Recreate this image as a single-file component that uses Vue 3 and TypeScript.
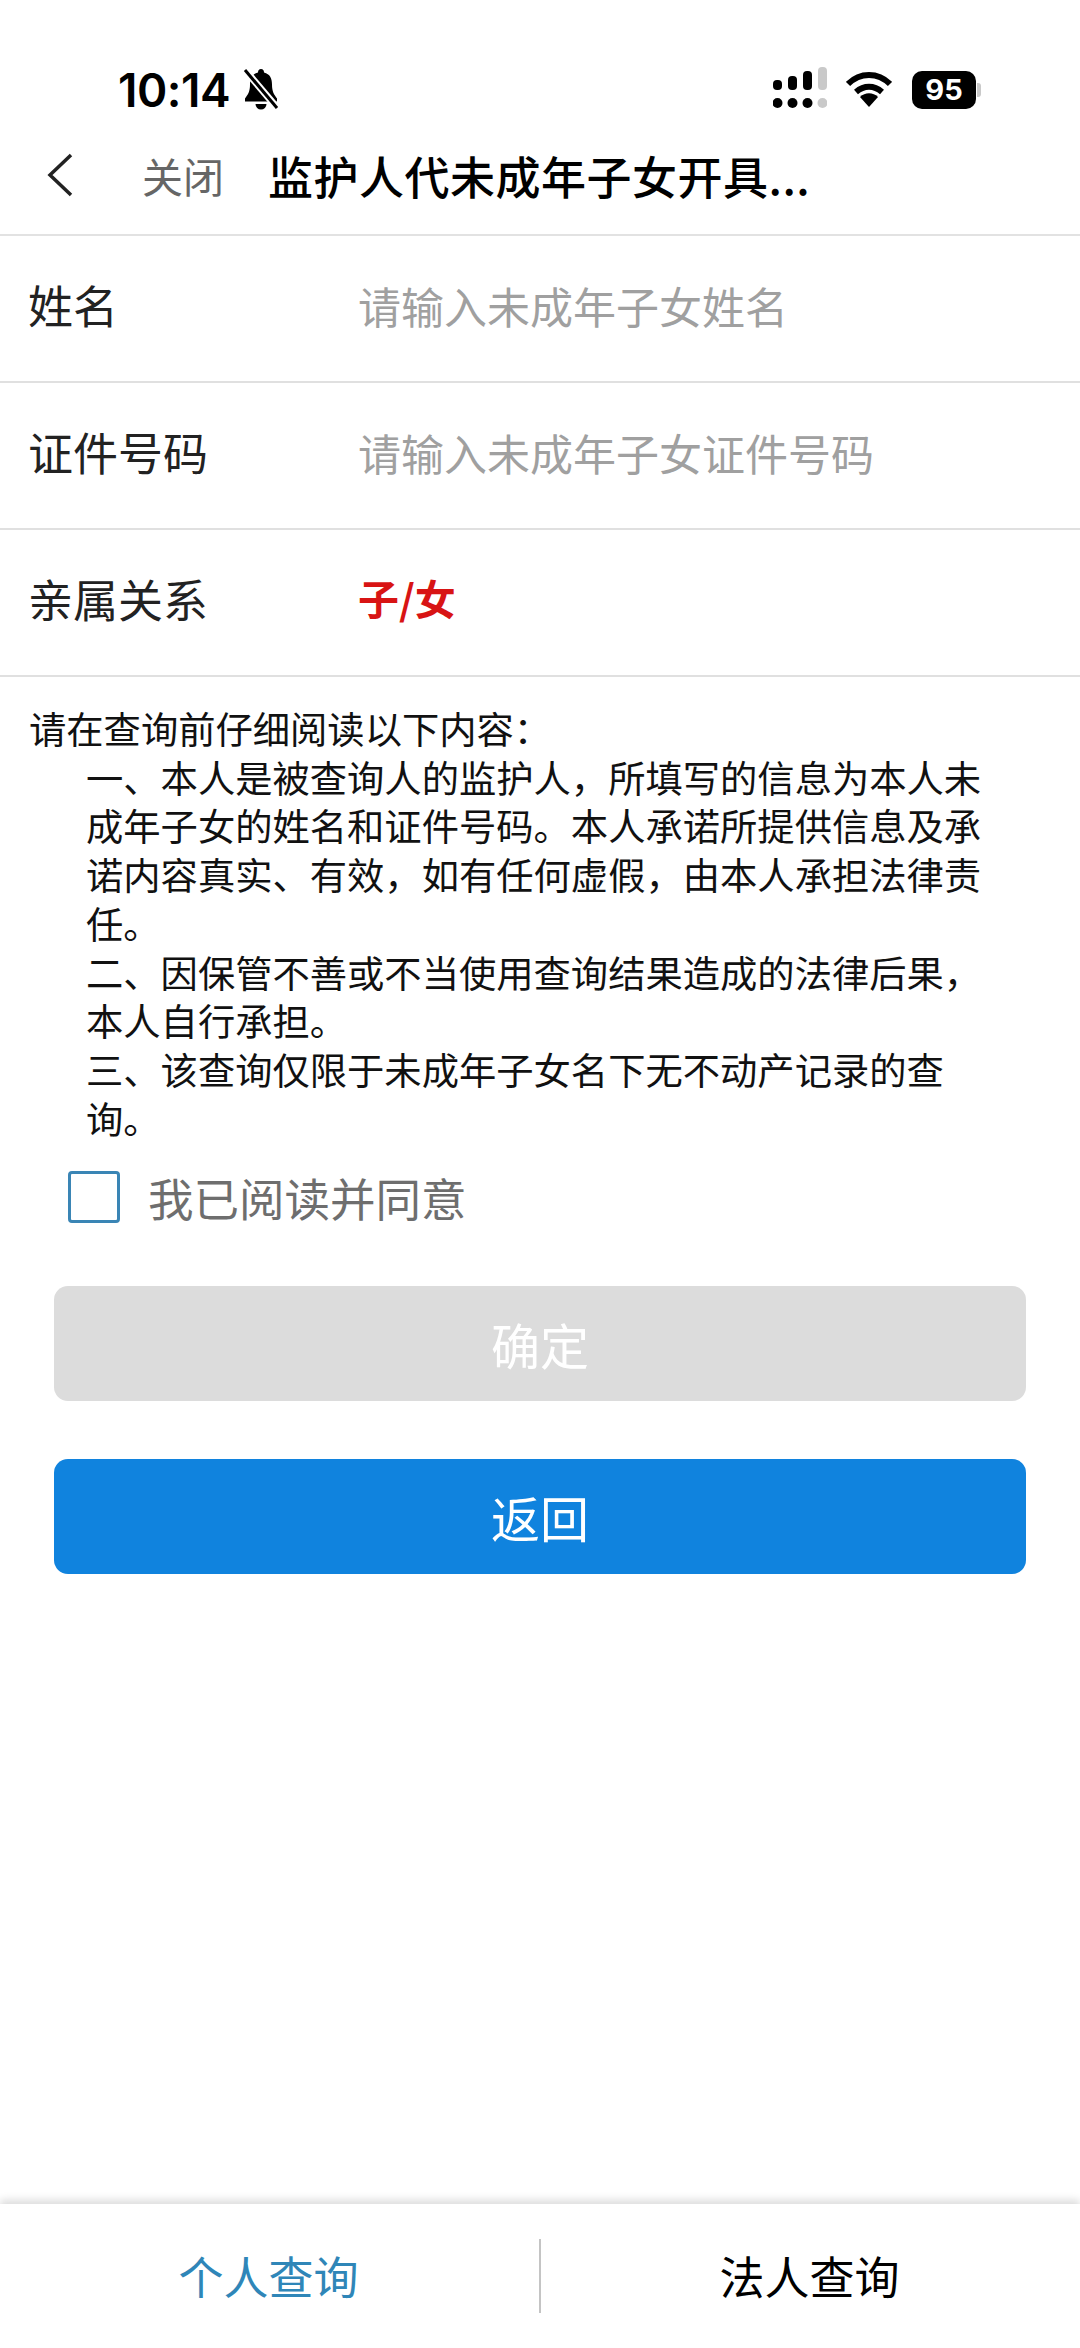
<script setup lang="ts">
import { ref } from 'vue'

type Field = {
  label: string
  placeholder?: string
  value?: string
}

const fields: Field[] = [
  { label: '姓名', placeholder: '请输入未成年子女姓名' },
  { label: '证件号码', placeholder: '请输入未成年子女证件号码' },
  { label: '亲属关系', value: '子/女' },
]

const noticeTitle = '请在查询前仔细阅读以下内容\uFF1A'
const notices = [
  '一、本人是被查询人的监护人\uFF0C所填写的信息为本人未成年子女的姓名和证件号码。本人承诺所提供信息及承诺内容真实、有效\uFF0C如有任何虚假\uFF0C由本人承担法律责任。',
  '二、因保管不善或不当使用查询结果造成的法律后果\uFF0C本人自行承担。',
  '三、该查询仅限于未成年子女名下无不动产记录的查询。',
]

const agreed = ref(false)
const signalBars = [
  { x: 0, y: 13, h: 10, c: '#000' },
  { x: 15, y: 9, h: 14, c: '#000' },
  { x: 30, y: 4, h: 19, c: '#000' },
  { x: 45, y: 0, h: 23, c: '#c9c9c9' },
]
</script>

<template>
  <div class="page">
    <div class="status-bar">
      <div class="time">10:14</div>
      <svg class="bell" viewBox="0 0 40 44" width="40" height="44" aria-hidden="true">
        <path d="M20 1c2 0 3 1.500 3 3.500 6 1.500 8 6 8 12 0 7 2 10 5 14v3H4v-3c3-4 5-7 5-14 0-6 2-10.500 8-12C17 2.500 18 1 20 1z" fill="#000" />
        <path d="M14.500 36h11a5.500 5.500 0 0 1-11 0z" fill="#000" />
        <path d="M4 2l34 40" stroke="#fff" stroke-width="7" />
        <path d="M4 2l32 38" stroke="#000" stroke-width="3" />
      </svg>
      <div class="status-right">
        <svg class="signal" viewBox="0 0 54 46" width="54" height="46" aria-hidden="true">
          <rect v-for="b in signalBars" :key="b.x" :x="b.x" :y="b.y" width="9" :height="b.h" rx="4" :fill="b.c" />
          <circle v-for="b in signalBars" :key="'d' + b.x" :cx="b.x + 4.500" cy="36" r="5" :fill="b.c" />
        </svg>
        <svg class="wifi" viewBox="0 0 46 36" width="46" height="36" aria-hidden="true">
          <path d="M2 12C14 0 32 0 44 12" fill="none" stroke="#000" stroke-width="6" />
          <path d="M10 20c8-7 18-7 26 0" fill="none" stroke="#000" stroke-width="6" />
          <path d="M14 25c5-5 13-5 18 0l-9 10z" fill="#000" />
        </svg>
        <div class="battery">95</div>
        <div class="battery-cap"></div>
      </div>
    </div>

    <div class="nav-bar">
      <svg class="back" viewBox="0 0 28 44" width="28" height="44" aria-hidden="true">
        <path d="M25 2L4 22l21 20" fill="none" stroke="#222" stroke-width="3.500" />
      </svg>
      <span class="close">关闭</span>
      <span class="title">监护人代未成年子女开具...</span>
    </div>

    <div v-for="f in fields" :key="f.label" class="field">
      <span class="field-label">{{ f.label }}</span>
      <span v-if="f.value" class="field-value">{{ f.value }}</span>
      <span v-else class="field-placeholder">{{ f.placeholder }}</span>
    </div>

    <div class="notice">
      <div>{{ noticeTitle }}</div>
      <div v-for="n in notices" :key="n" class="notice-item">{{ n }}</div>
    </div>

    <label class="agree">
      <span class="checkbox" :class="{ on: agreed }"></span>
      <span>我已阅读并同意</span>
    </label>

    <div class="btn disabled">确定</div>
    <div class="btn primary">返回</div>

    <div class="tab-bar">
      <div class="tab active">个人查询</div>
      <div class="tab-sep"></div>
      <div class="tab">法人查询</div>
    </div>
  </div>
</template>

<style scoped>
.page {
  width: 1080px;
  height: 2348px;
  display: flex;
  flex-direction: column;
  background: #fff;
  color: #000;
  font-family: 'Noto Sans CJK SC', 'Liberation Sans', sans-serif;
  overflow: hidden;
}

.status-bar {
  height: 116px;
  flex: none;
  display: flex;
  align-items: flex-end;
  padding: 0 99px 0 118px;
  box-sizing: border-box;
}

.time {
  font-family: Inter, 'Liberation Sans', sans-serif;
  font-size: 46px;
  line-height: 50px;
  font-weight: 600;
  letter-spacing: -0.500px;
  margin-bottom: 1px;
}

.bell {
  margin: 0 0 4px 11px;
}

.status-right {
  margin-left: auto;
  display: flex;
  align-items: center;
  margin-bottom: 3px;
}

.signal {
  margin-right: 19px;
}

.wifi {
  margin-right: 20px;
}

.battery {
  width: 64px;
  height: 38px;
  border-radius: 10px;
  background: #000;
  color: #fff;
  font-family: Inter, 'Liberation Sans', sans-serif;
  font-size: 29px;
  font-weight: 700;
  line-height: 38px;
  text-align: center;
}

.battery-cap {
  width: 4px;
  height: 14px;
  margin-left: 1px;
  border-radius: 0 3px 3px 0;
  background: #c9c9c9;
}

.nav-bar {
  height: 120px;
  flex: none;
  display: flex;
  align-items: center;
  padding-left: 46px;
  box-sizing: border-box;
  border-bottom: 2px solid #e2e2e2;
}

.back {
  flex: none;
}

.close {
  margin-left: 68px;
  font-size: 41px;
  color: #666;
}

.title {
  margin-left: 44px;
  font-size: 45px;
  font-weight: 500;
  letter-spacing: 0.500px;
}

.field {
  height: 147px;
  flex: none;
  display: flex;
  align-items: center;
  padding: 0 0 8px 28px;
  box-sizing: border-box;
  border-bottom: 2px solid #e0e0e0;
}

.field-label {
  width: 330px;
  font-size: 45px;
  color: #222;
}

.field-placeholder {
  font-size: 43px;
  color: #a0a0a0;
}

.field-value {
  font-size: 41px;
  font-weight: 700;
  color: #d81414;
  padding-bottom: 3px;
}

.notice {
  width: 1000px;
  padding: 27px 0 0 29px;
  box-sizing: border-box;
  font-size: 37.300px;
  line-height: 48.700px;
  color: #111;
}

.notice-item {
  padding-left: 57px;
}

.agree {
  display: flex;
  align-items: center;
  margin: 24px 0 0 68px;
  font-size: 45.500px;
  line-height: 62px;
  color: #6e6e6e;
}

.checkbox {
  width: 52px;
  height: 52px;
  margin-right: 28px;
  border: 3px solid #3a85b5;
  border-radius: 4px;
  box-sizing: border-box;
}

.btn {
  height: 115px;
  flex: none;
  margin: 0 54px;
  border-radius: 14px;
  display: flex;
  align-items: center;
  justify-content: center;
  font-size: 49px;
  color: #fff;
}

.disabled {
  margin-top: 58px;
  background: #dcdcdc;
}

.primary {
  margin-top: 58px;
  background: #1083de;
}

.tab-bar {
  margin-top: auto;
  height: 144px;
  flex: none;
  display: flex;
  align-items: center;
  box-shadow: 0 -4px 8px rgba(0, 0, 0, 0.14);
}

.tab {
  flex: 1;
  text-align: center;
  font-size: 45px;
  line-height: 60px;
  margin-right: 2px;
}

.tab.active {
  color: #2f86b8;
}

.tab-sep {
  width: 2px;
  height: 74px;
  background: #c4c4c4;
}
</style>

<style>
html,
body {
  margin: 0;
  background: #fff;
}
</style>
